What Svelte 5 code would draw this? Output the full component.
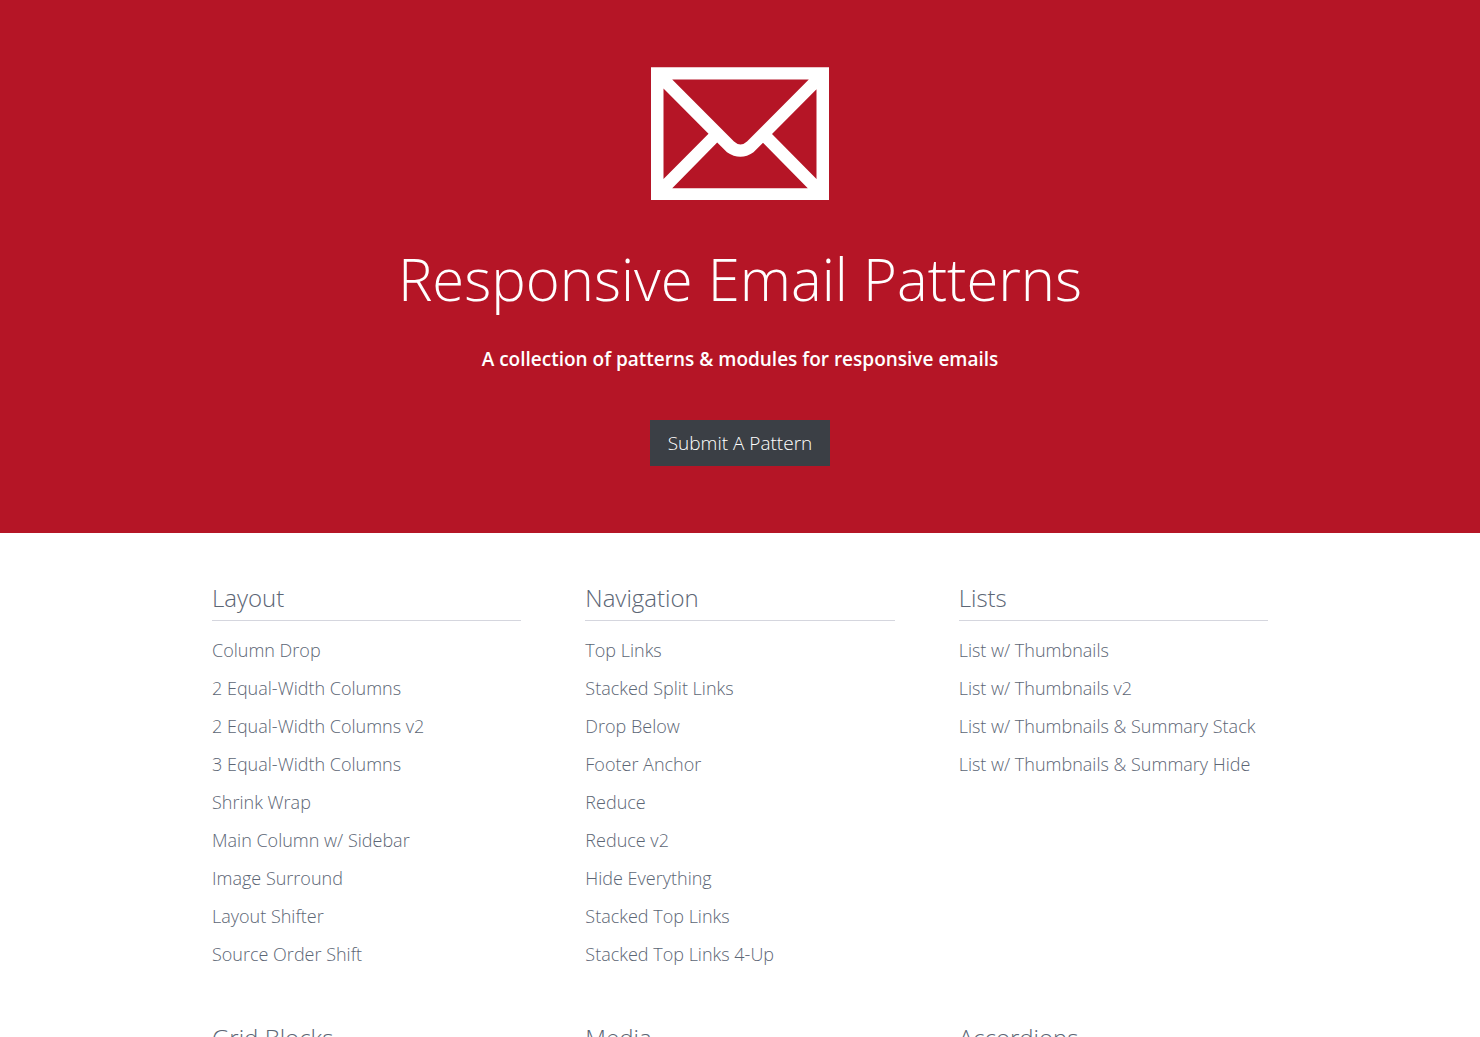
<script>
  const groups = [
    {
      title: "Layout",
      links: [
        "Column Drop",
        "2 Equal-Width Columns",
        "2 Equal-Width Columns v2",
        "3 Equal-Width Columns",
        "Shrink Wrap",
        "Main Column w/ Sidebar",
        "Image Surround",
        "Layout Shifter",
        "Source Order Shift",
      ],
    },
    {
      title: "Navigation",
      links: [
        "Top Links",
        "Stacked Split Links",
        "Drop Below",
        "Footer Anchor",
        "Reduce",
        "Reduce v2",
        "Hide Everything",
        "Stacked Top Links",
        "Stacked Top Links 4-Up",
      ],
    },
    {
      title: "Lists",
      links: [
        "List w/ Thumbnails",
        "List w/ Thumbnails v2",
        "List w/ Thumbnails & Summary Stack",
        "List w/ Thumbnails & Summary Hide",
      ],
    },
    { title: "Grid Blocks", links: [] },
    { title: "Media", links: [] },
    { title: "Accordions", links: [] },
  ];
</script>

<header class="hero">
  <svg class="logo" viewBox="0 0 178 133" aria-hidden="true">
    <path
      fill="#fff"
      fill-rule="evenodd"
      d="M0 .3H178V133H0z
        M21.2 12.5L83 74.5Q89.5 80.5 96 74.5L157.8 12.5z
        M12.5 21.5V112L57.5 66.7z
        M165.5 22.3L121 67L165.5 112z
        M21.2 121.2H156.8L112 75.8L102.5 85.2Q89.5 94.4 76 85.2L66.2 75.6z"
    />
  </svg>
  <h1>Responsive Email Patterns</h1>
  <p class="tagline">A collection of patterns &amp; modules for responsive emails</p>
  <a class="button" href="#submit">Submit A Pattern</a>
</header>

<main class="patterns">
  {#each groups as group}
    <section>
      <h2>{group.title}</h2>
      {#if group.links.length}
        <ul>
          {#each group.links as link}
            <li><a href="#pattern">{link}</a></li>
          {/each}
        </ul>
      {/if}
    </section>
  {/each}
</main>

<style>
  :global(body) {
    margin: 0;
    background: #fff;
    color: #5c6675;
    font-family: "Open Sans", sans-serif;
    font-weight: 300;
  }

  .hero {
    display: flex;
    flex-direction: column;
    align-items: center;
    padding: 67px 20px;
    background: #b51526;
    color: #fff;
    text-align: center;
  }

  .logo {
    display: block;
    width: 178px;
    height: 133px;
  }

  h1 {
    margin: 40px 0 0;
    font-size: 58px;
    font-weight: 300;
    line-height: 78px;
  }

  .tagline {
    margin: 26px 0 0;
    font-size: 19px;
    font-weight: 600;
    line-height: 30px;
  }

  .button {
    margin-top: 46px;
    padding: 8px 18px;
    background: #3b3f45;
    color: #fff;
    font-size: 19px;
    line-height: 30px;
    text-decoration: none;
  }

  .patterns {
    display: grid;
    grid-template-columns: repeat(3, 1fr);
    gap: 46px 64px;
    max-width: 1056px;
    margin: 0 auto;
    padding: 46px 20px;
  }

  h2 {
    margin: 0 0 10px;
    padding-bottom: 3px;
    border-bottom: 1px solid #d5d6de;
    font-size: 24px;
    font-weight: 300;
    line-height: 38px;
  }

  ul {
    margin: 0;
    padding: 0;
    list-style: none;
  }

  li {
    font-size: 18px;
    line-height: 38px;
  }

  li a {
    color: inherit;
    text-decoration: none;
  }

  @media only screen and (max-width: 800px) {
    .patterns {
      grid-template-columns: 1fr;
    }

    h1 {
      font-size: 38px;
      line-height: 50px;
    }
  }
</style>
